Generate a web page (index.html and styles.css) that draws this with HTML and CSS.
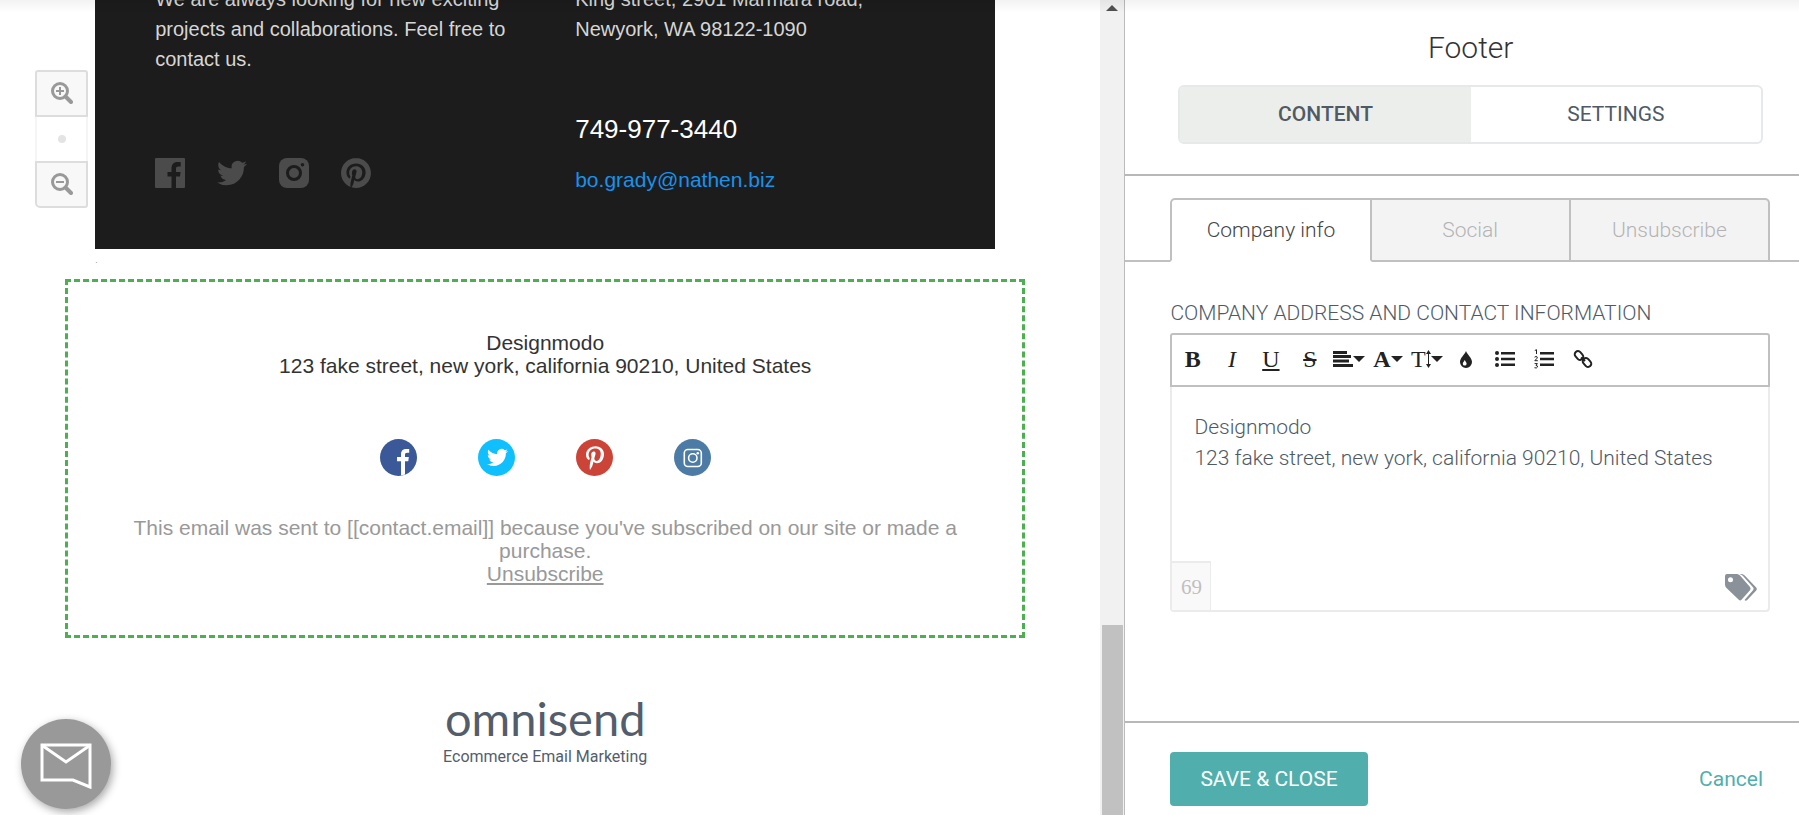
FILE: index.html
```html
<!DOCTYPE html>
<html lang="en">
<head>
    <meta charset="UTF-8">
    <meta name="viewport" content="width=device-width, initial-scale=1.0">
    <title>Footer</title>
    <link rel="stylesheet" href="styles.css">
</head>
<body>
    <svg class="sprite" aria-hidden="true">
        <symbol id="twitter" viewBox="0 0 24 24">
            <path d="M23.953 4.57a10 10 0 01-2.825.775 4.958 4.958 0 002.163-2.723c-.951.555-2.005.959-3.127 1.184a4.92 4.92 0 00-8.384 4.482C7.69 8.095 4.067 6.13 1.64 3.162a4.822 4.822 0 00-.666 2.475c0 1.71.87 3.213 2.188 4.096a4.904 4.904 0 01-2.228-.616v.06a4.923 4.923 0 003.946 4.827 4.996 4.996 0 01-2.212.085 4.936 4.936 0 004.604 3.417 9.867 9.867 0 01-6.102 2.105c-.39 0-.779-.023-1.17-.067a13.995 13.995 0 007.557 2.209c9.053 0 13.998-7.496 13.998-13.985 0-.21 0-.42-.015-.63A9.935 9.935 0 0024 4.59z"/>
        </symbol>
        <symbol id="pinterest" viewBox="0 0 384 512">
            <path d="M204 6.5C101.4 6.5 0 74.9 0 185.6 0 256 39.6 296 63.6 296c9.9 0 15.6-27.6 15.6-35.4 0-9.3-23.7-29.1-23.7-67.8 0-80.4 61.2-137.4 140.4-137.4 68.1 0 118.5 38.7 118.5 109.8 0 53.1-21.3 152.7-90.3 152.7-24.9 0-46.2-18-46.2-43.8 0-37.8 26.4-74.4 26.4-113.4 0-66.2-93.9-54.2-93.9 25.8 0 16.8 2.1 35.4 9.6 50.7-13.8 59.4-42 147.9-42 209.1 0 18.9 2.7 37.5 4.5 56.4 3.4 3.8 1.7 3.4 6.9 1.5 50.4-69 48.6-82.5 71.4-172.8 12.3 23.4 44.1 36 69.3 36 106.2 0 153.9-103.5 153.9-196.8C384 71.3 298.2 6.5 204 6.5z"/>
        </symbol>
    </svg>

    <main class="preview">
        <div class="zoom-controls">
            <button class="zoom-in" aria-label="Zoom in">
                <svg viewBox="0 0 22 22" width="22" height="22"><circle cx="9" cy="9" r="7.5"/><path d="M14.5 14.5l5.5 5.5" class="handle"/><path d="M5 9h8M9 5v8" class="sign"/></svg>
            </button>
            <button class="zoom-reset" aria-label="Reset zoom"><span class="dot"></span></button>
            <button class="zoom-out" aria-label="Zoom out">
                <svg viewBox="0 0 22 22" width="22" height="22"><circle cx="9" cy="9" r="7.5"/><path d="M14.5 14.5l5.5 5.5" class="handle"/><path d="M5 9h8" class="sign"/></svg>
            </button>
        </div>

        <section class="contact">
            <div>
                <p>We are always looking for new exciting<br>projects and collaborations. Feel free to<br>contact us.</p>
                <div class="contact-social">
                    <a href="#" aria-label="Facebook"><svg viewBox="0 0 30 30"><path d="M1 0h28a1 1 0 011 1v28a1 1 0 01-1 1h-8V18.500h4l.5-4.500H21v-3c0-1.700.6-2.500 2.500-2.500h2.200V4.200C25 4 24 4 22.500 4 18.500 4 16.500 6.500 16.500 10.300V14H12.500v4.500h4V30H1a1 1 0 01-1-1V1a1 1 0 011-1z"/></svg></a>
                    <a href="#" aria-label="Twitter"><svg><use href="#twitter"/></svg></a>
                    <a href="#" aria-label="Instagram"><svg viewBox="0 0 30 30"><rect width="30" height="30" rx="8"/><circle class="cut" cx="15" cy="15" r="6.500"/><circle class="cut-dot" cx="23.500" cy="6.800" r="1.800"/></svg></a>
                    <a href="#" aria-label="Pinterest"><svg viewBox="0 0 24 24"><path d="M12.017 0C5.396 0 .029 5.367.029 11.987c0 5.079 3.158 9.417 7.618 11.162-.105-.949-.199-2.403.041-3.439.219-.937 1.406-5.957 1.406-5.957s-.359-.72-.359-1.781c0-1.663.967-2.911 2.168-2.911 1.024 0 1.518.769 1.518 1.688 0 1.029-.653 2.567-.992 3.992-.285 1.193.6 2.165 1.775 2.165 2.128 0 3.768-2.245 3.768-5.487 0-2.861-2.063-4.869-5.008-4.869-3.41 0-5.409 2.562-5.409 5.199 0 1.033.394 2.143.889 2.741.099.12.112.225.085.345-.09.375-.293 1.199-.334 1.363-.053.225-.172.271-.401.165-1.495-.69-2.433-2.878-2.433-4.646 0-3.776 2.748-7.252 7.92-7.252 4.158 0 7.392 2.967 7.392 6.923 0 4.135-2.607 7.462-6.233 7.462-1.214 0-2.354-.629-2.758-1.379l-.749 2.848c-.269 1.045-1.004 2.352-1.498 3.146 1.123.345 2.306.535 3.55.535 6.607 0 11.985-5.365 11.985-11.987C23.970 5.390 18.592.026 11.985.026L12.017 0z"/></svg></a>
                </div>
            </div>
            <div>
                <p>King street, 2901 Marmara road,<br>Newyork, WA 98122-1090</p>
                <p class="phone">749-977-3440</p>
                <a class="email" href="mailto:bo.grady@nathen.biz">bo.grady@nathen.biz</a>
            </div>
        </section>
        <div class="spacer">.</div>

        <section class="email-footer">
            <p>Designmodo<br>123 fake street, new york, california 90210, United States</p>
            <div class="social">
                <a href="#" aria-label="Facebook"><svg viewBox="0 0 37 37"><circle cx="18.500" cy="18.500" r="18.500" fill="#3b5998"/><path fill="#fff" d="M21 36.600V22.200h-4v-4.200h4v-2.700c0-3.400 2-5.300 5.200-5.300h3v3.700h-1.800c-2 0-2.400.8-2.400 2.200v2.100h3.800l-.5 4.200H25V35.600z"/></svg></a>
                <a href="#" aria-label="Twitter"><svg viewBox="0 0 37 37"><circle cx="18.500" cy="18.500" r="18.500" fill="#10c0fe"/><use href="#twitter" x="9" y="8" width="21" height="21" fill="#fff"/></svg></a>
                <a href="#" aria-label="Pinterest"><svg viewBox="0 0 37 37"><circle cx="18.500" cy="18.500" r="18.500" fill="#cb4437"/><use href="#pinterest" x="9" y="7" width="20" height="24" fill="#fff"/></svg></a>
                <a href="#" aria-label="Instagram"><svg viewBox="0 0 37 37"><circle cx="18.500" cy="18.500" r="18.500" fill="#4c7ba5"/><g fill="none" stroke="#fff" stroke-width="1.600"><rect x="10.300" y="10.500" width="17" height="17" rx="3.500"/><circle cx="18.800" cy="19" r="4.200"/></g><circle cx="23.800" cy="14.200" r="1.300" fill="#fff"/></svg></a>
            </div>
            <p class="legal">This email was sent to [[contact.email]] because you've subscribed on our site or made a purchase.<br><a href="#">Unsubscribe</a></p>
        </section>

        <div class="brand">
            <div class="brand-name">omnisend</div>
            <div class="brand-tagline">Ecommerce Email Marketing</div>
        </div>

        <button class="chat" aria-label="Contact support">
            <svg viewBox="0 0 52 46" width="52" height="46"><path d="M2 2h48v42L33 37H2z"/><path d="M3 3l23 16L49 3"/></svg>
        </button>
    </main>

    <div class="scrollbar">
        <span class="scroll-up"></span>
        <span class="scroll-thumb"></span>
    </div>

    <aside class="panel">
        <header class="panel-header">
            <h1>Footer</h1>
            <div class="switch">
                <button class="active">CONTENT</button>
                <button>SETTINGS</button>
            </div>
        </header>

        <nav class="tabs">
            <button class="active">Company info</button>
            <button>Social</button>
            <button>Unsubscribe</button>
        </nav>

        <div class="field">
            <label for="address">COMPANY ADDRESS AND CONTACT INFORMATION</label>
            <div class="toolbar">
                <button class="bold" aria-label="Bold">B</button>
                <button class="italic" aria-label="Italic">I</button>
                <button class="underline" aria-label="Underline">U</button>
                <button class="strike" aria-label="Strikethrough">S</button>
                <button aria-label="Align">
                    <svg viewBox="0 0 20 16" width="20" height="16"><path d="M0 0h14v3H0zM0 4h18v3H0zM0 8.500h16v3H0zM0 13h20v3H0z"/></svg><span class="caret"></span>
                </button>
                <button class="bold" aria-label="Font">A<span class="caret"></span></button>
                <button aria-label="Font size">T<svg viewBox="0 0 5 18" width="5" height="18"><path d="M2 2h1v14H2zM2.500 0L5 4H0zM2.500 18L0 14h5z"/></svg><span class="caret"></span></button>
                <button aria-label="Color">
                    <svg viewBox="0 0 12 17" width="12" height="17"><path fill-rule="evenodd" d="M6 0c1 3.500 6 6.500 6 11a6 6 0 01-12 0C0 6.500 5 3.500 6 0zM4.800 9C4 10.600 2.800 11.200 2.800 12.700a1.900 1.900 0 003.800 0C6.600 11.200 5.400 10.600 4.800 9z"/></svg>
                </button>
                <button aria-label="Bulleted list">
                    <svg viewBox="0 0 20 16" width="20" height="16"><circle cx="2" cy="2" r="2"/><circle cx="2" cy="8" r="2"/><circle cx="2" cy="14" r="2"/><path d="M6 1h14v2.500H6zM6 6.800h14v2.500H6zM6 12.600h14v2.500H6z"/></svg>
                </button>
                <button aria-label="Numbered list">
                    <svg viewBox="0 0 20 20" width="20" height="20"><path class="line" d="M.8 1.500L2.500.7V5M.6 8.200Q2.500 6.600 3.300 8 3.500 9.300.8 11.700H3.800M.6 14.600H3.400L2 16.400Q3.800 16.500 3.500 18 2.600 19.600.5 18.700"/><path d="M6 3h14v2.500H6zM6 8.800h14v2.500H6zM6 14.600h14v2.500H6z"/></svg>
                </button>
                <button aria-label="Link">
                    <svg viewBox="0 0 20 18" width="20" height="18"><g class="link-ring"><rect x="-4.800" y="-3.200" width="9.600" height="6.400" rx="3.200" transform="translate(6 5.500) rotate(48)"/><rect x="-4.800" y="-3.200" width="9.600" height="6.400" rx="3.200" transform="translate(14 12.500) rotate(48)"/><path d="M8 7.500l4 3.500"/></g></svg>
                </button>
            </div>
            <div class="editor">
                <textarea id="address" spellcheck="false">Designmodo
123 fake street, new york, california 90210, United States</textarea>
                <div class="editor-bar">
                    <span class="counter">69</span>
                    <button class="tags" aria-label="Insert tag">
                        <svg viewBox="0 0 32 27" width="32" height="27"><path fill-rule="evenodd" d="M2 0h10q1.500 0 3 1.500L25 13q1.200 1.700 0 3.200l-8.500 9.600q-1.300 1.200-2.700 0L1.500 14Q0 12.500 0 10.500V2Q0 0 2 0zM5.500 3.200a2.500 2.500 0 100 5 2.500 2.500 0 000-5z"/><path d="M14.500 0h2.200q1.500 0 3 1.500L31.200 13.500q1.200 1.300 0 2.900L22 26.300q-1.300 1-2.500-.2l8.500-9.900q1.200-1.400 0-2.900L18 2Q16.500.3 14.500 0z"/></svg>
                    </button>
                </div>
            </div>
        </div>

        <footer class="panel-footer">
            <button class="save">SAVE &amp; CLOSE</button>
            <a class="cancel" href="#">Cancel</a>
        </footer>
    </aside>
    <div class="top-shade"></div>
</body>
</html>
```
FILE: styles.css
```css
* {
    box-sizing: border-box;
}
body {
    margin: 0;
    display: flex;
    height: 100vh;
    overflow: hidden;
    background-color: #ffffff;
    font-family: "Liberation Sans", Arial, sans-serif;
    font-size: 21px;
}
p, h1 {
    margin: 0;
}
button {
    margin: 0;
    padding: 0;
    border: none;
    background: none;
    font: inherit;
    color: inherit;
    cursor: pointer;
}
.sprite {
    display: none;
}
.top-shade {
    position: fixed;
    top: 0;
    left: 0;
    right: 0;
    height: 12px;
    background: linear-gradient(rgba(0, 0, 0, 0.05), rgba(0, 0, 0, 0));
    pointer-events: none;
}

/* email preview */
.preview {
    position: relative;
    flex: 1;
    display: flex;
    flex-direction: column;
    align-items: center;
    padding-right: 10px;
    overflow: hidden;
}
.contact {
    display: grid;
    grid-template-columns: 1fr 1fr;
    gap: 60px;
    width: 100%;
    max-width: 900px;
    margin-top: -16px;
    padding: 0 60px 54px;
    background-color: #1c1c1c;
    color: #d6d6d6;
    font-size: 20px;
    line-height: 30px;
    white-space: nowrap;
}
.contact-social {
    display: flex;
    gap: 32px;
    margin-top: 84px;
}
.contact-social svg {
    display: block;
    width: 30px;
    height: 30px;
    fill: #4b4b4b;
}
.contact-social .cut {
    fill: none;
    stroke: #1c1c1c;
    stroke-width: 3;
}
.contact-social .cut-dot {
    fill: #1c1c1c;
}
.contact .phone {
    margin-top: 67px;
    color: #ffffff;
    font-size: 26px;
    line-height: 36px;
}
.contact .email {
    display: block;
    margin-top: 18px;
    color: #1991eb;
    font-size: 21px;
    text-decoration: none;
}
.spacer {
    width: 100%;
    max-width: 900px;
    height: 30px;
    color: #777777;
    font-size: 8px;
    line-height: 24px;
}
.email-footer {
    width: 100%;
    max-width: 960px;
    padding: 49px 60px 50px;
    border: 3px dashed #4caf50;
    color: #333333;
    line-height: 23px;
    text-align: center;
}
.social {
    display: flex;
    justify-content: center;
    gap: 61px;
    margin: 62px 0 40px;
}
.social svg {
    display: block;
    width: 37px;
    height: 37px;
}
.legal, .legal a {
    color: #999999;
}
.brand {
    margin-top: 56px;
    color: #545d6b;
    text-align: center;
}
.brand-name {
    font-family: Lato, sans-serif;
    font-size: 47px;
    line-height: 48px;
}
.brand-tagline {
    margin-top: 5px;
    font-family: Roboto, sans-serif;
    font-size: 16px;
    line-height: 20px;
}
.zoom-controls {
    position: absolute;
    top: 70px;
    left: 35px;
    display: flex;
    flex-direction: column;
    width: 53px;
}
.zoom-controls button {
    display: flex;
    align-items: center;
    justify-content: center;
    height: 47px;
    padding-bottom: 2px;
    border: 2px solid #dddddd;
    background-color: #f8f8f8;
}
.zoom-controls .zoom-in {
    border-radius: 3px 3px 0 0;
}
.zoom-controls .zoom-out {
    border-radius: 0 0 3px 5px;
}
.zoom-controls .zoom-reset {
    height: 44px;
    padding-bottom: 0;
    border-width: 0 2px;
    border-color: #f5f5f5;
    background-color: #ffffff;
}
.zoom-controls svg {
    fill: none;
    stroke: #999999;
    stroke-width: 3;
}
.zoom-controls .handle {
    stroke-width: 4;
    stroke-linecap: round;
}
.zoom-controls .sign {
    stroke-width: 2;
}
.dot {
    width: 8px;
    height: 8px;
    border-radius: 50%;
    background-color: #e4e4e4;
}
.chat {
    position: absolute;
    left: 21px;
    bottom: 6px;
    display: flex;
    align-items: center;
    justify-content: center;
    width: 90px;
    height: 90px;
    padding-top: 4px;
    border-radius: 50%;
    background-color: #999999;
    box-shadow: 2px 3px 8px rgba(0, 0, 0, 0.35);
}
.chat svg {
    fill: none;
    stroke: #ffffff;
    stroke-width: 3;
}

/* scrollbar */
.scrollbar {
    display: flex;
    flex-direction: column;
    align-items: center;
    justify-content: space-between;
    width: 24px;
    padding-top: 5px;
    background-color: #f1f1f1;
}
.scroll-up {
    border: 6px solid transparent;
    border-top: none;
    border-bottom-color: #505050;
}
.scroll-thumb {
    width: 21px;
    height: 190px;
    background-color: #c1c1c1;
}

/* settings panel */
.panel {
    display: flex;
    flex-direction: column;
    width: 37.5%;
    border-left: 1px solid #bbbbbb;
    background-color: #ffffff;
    color: #4f5a65;
    font-family: Roboto, sans-serif;
    line-height: 24px;
}
.panel-header {
    padding: 30px 36px 30px 53px;
    border-bottom: 2px solid #b8b8b8;
    text-align: center;
}
.panel-header h1 {
    color: #333333;
    font-size: 30px;
    font-weight: 300;
    line-height: 36px;
}
.switch {
    display: flex;
    height: 59px;
    margin-top: 19px;
    border: 2px solid #e6e8ea;
    border-radius: 6px;
    overflow: hidden;
}
.switch button {
    flex: 1;
    padding-bottom: 2px;
}
.switch .active {
    background-color: #eceeeb;
    font-weight: 500;
}
.tabs {
    display: flex;
    height: 64px;
    margin-top: 22px;
    padding: 0 29px 0 45px;
    box-shadow: inset 0 -2px #c0c0c0;
}
.tabs button {
    flex: 1;
    border: 2px solid #c0c0c0;
    border-left: none;
    background-color: #f3f3f3;
    color: #b3b3b3;
    font-weight: 300;
}
.tabs .active {
    border-left: 2px solid #c0c0c0;
    border-bottom-color: #ffffff;
    border-top-left-radius: 5px;
    background-color: #ffffff;
    color: #444444;
}
.tabs button:last-child {
    border-top-right-radius: 5px;
}
.field {
    flex: 1;
    padding: 39px 29px 0 45px;
}
.field label {
    display: block;
    margin-bottom: 8px;
    font-weight: 300;
}
.toolbar {
    display: flex;
    height: 54px;
    padding: 0 0 2px 1px;
    border: 2px solid #c0c0c0;
    border-radius: 3px 3px 0 0;
    color: #222222;
    font-family: "Liberation Serif", serif;
    font-size: 24px;
}
.toolbar button {
    display: flex;
    align-items: center;
    justify-content: center;
    width: 39px;
}
.toolbar svg {
    flex-shrink: 0;
    fill: #222222;
}
.toolbar .line {
    fill: none;
    stroke: #222222;
}
.link-ring {
    fill: none;
    stroke: #222222;
    stroke-width: 2;
}
.bold {
    font-weight: bold;
}
.italic {
    font-style: italic;
}
.toolbar .underline {
    text-decoration: underline;
}
.toolbar .strike {
    text-decoration: line-through;
}
.caret {
    border: 6px solid transparent;
    border-top-color: #222222;
    border-bottom: none;
}
.editor {
    display: flex;
    flex-direction: column;
    border: 2px solid #ebebeb;
    border-top: none;
    border-radius: 0 0 4px 4px;
}
.editor textarea {
    display: block;
    width: 100%;
    height: 174px;
    padding: 25px 22px 0;
    border: none;
    outline: none;
    resize: none;
    background: none;
    color: inherit;
    font: inherit;
    font-weight: 300;
    line-height: 31px;
}
.editor-bar {
    display: flex;
    align-items: center;
    justify-content: space-between;
    height: 49px;
    padding-right: 11px;
}
.counter {
    display: flex;
    align-items: center;
    justify-content: center;
    width: 39px;
    height: 100%;
    border: 1px solid #ebebeb;
    border-width: 2px 1px 0 0;
    background-color: #f9f9f9;
    color: #bfbfbf;
    font-family: "Liberation Serif", serif;
}
.tags {
    padding-top: 3px;
}
.tags svg {
    display: block;
    fill: #8b9199;
}
.panel-footer {
    display: flex;
    align-items: center;
    justify-content: space-between;
    padding: 29px 36px 9px 45px;
    border-top: 2px solid #b8b8b8;
}
.save {
    height: 54px;
    padding: 0 30px;
    border-radius: 4px;
    background-color: #50afad;
    color: #ffffff;
}
.cancel {
    color: #50afad;
    text-decoration: none;
}
```
